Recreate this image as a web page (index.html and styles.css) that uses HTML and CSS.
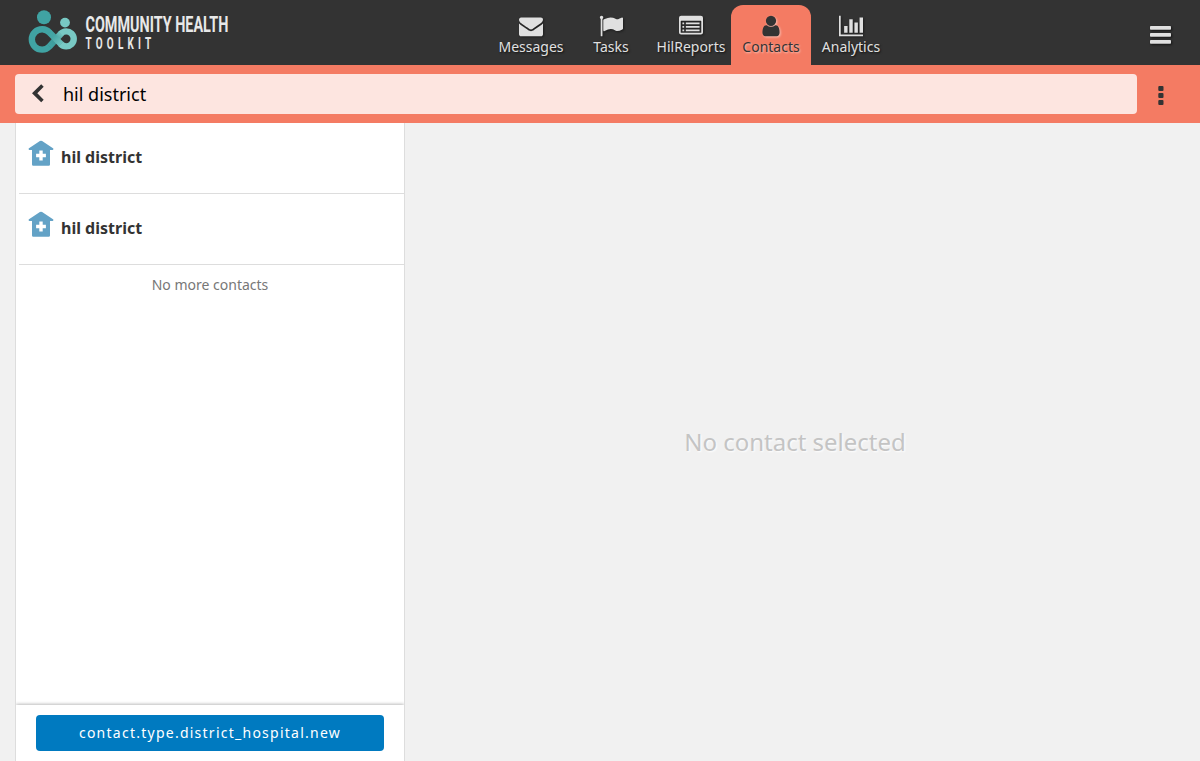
FILE: index.html
```html
<!DOCTYPE html>
<html lang="en">
<head>
<meta charset="utf-8">
<title>Contacts</title>
<link rel="stylesheet" href="styles.css">
</head>
<body>
<header class="header">
  <div class="brand">
    <svg class="logo" viewBox="0 0 240 65" role="img">
      <defs>
        <linearGradient id="band" gradientUnits="userSpaceOnUse" x1="48" y1="31" x2="63" y2="46">
          <stop offset="0" stop-color="#40a3a3"/><stop offset=".35" stop-color="#45a5a4"/><stop offset="1" stop-color="#78c9c4"/>
        </linearGradient>
        <linearGradient id="under" gradientUnits="userSpaceOnUse" x1="49" y1="46" x2="62" y2="33">
          <stop offset="0" stop-color="#40a3a3"/><stop offset=".5" stop-color="#3d9998"/><stop offset="1" stop-color="#78c9c4"/>
        </linearGradient>
      </defs>
      <circle cx="44" cy="17.2" r="7" fill="#40a3a3"/>
      <circle cx="65" cy="22.6" r="4.900" fill="#78c9c4"/>
      <g fill="none" stroke-width="6.400">
        <path d="M49.300 46.600L61.1 33.5" stroke="url(#under)"/>
        <path d="M60.800 33.700A7.500 7.500 0 1 1 60.800 44" stroke="#78c9c4"/>
        <path d="M49.600 32.600A10.2 10.2 0 1 0 49.500 46.400" stroke="#40a3a3"/>
        <path d="M49.2 32.200L61.200 44.300" stroke="url(#band)"/>
      </g>
      <g class="logo-text">
        <text transform="translate(85.500 32.400) scale(.7 1)" font-size="22" textLength="204" lengthAdjust="spacingAndGlyphs">COMMUNITY HEALTH</text>
        <text transform="translate(85.500 49.300) scale(.62 1)" font-size="16" textLength="106" lengthAdjust="spacing">TOOLKIT</text>
      </g>
    </svg>
  </div>
  <nav class="tabs">
    <a class="tab"><svg viewBox="0 0 1792 1792"><path d="M1792 710v794q0 66-47 113t-113 47h-1472q-66 0-113-47t-47-113v-794q44 49 101 87 362 246 497 345 57 42 92.5 65.5t94.5 48 110 24.5h2q51 0 110-24.5t94.5-48 92.5-65.5q170-123 498-345 57-39 100-87zm0-294q0 79-49 151t-122 123q-376 261-468 325-10 7-42.5 31t-54 38.5-52 32.5-57.5 27-50 9h-2q-23 0-50-9t-57.5-27-52-32.5-54-38.5-42.5-31q-91-64-262-182.5t-205-142.5q-62-42-117-115.5t-55-136.5q0-78 41.5-130t118.5-52h1472q65 0 112.5 47t47.5 113z"/></svg><span>Messages</span></a>
    <a class="tab"><svg viewBox="0 0 1792 1792"><path d="M320 256q0 72-64 110v1266q0 13-9.5 22.5t-22.5 9.5h-64q-13 0-22.5-9.5t-9.5-22.5v-1266q-64-38-64-110 0-53 37.5-90.5t90.5-37.5 90.5 37.5 37.5 90.5zm1472 64v763q0 25-12.5 38.5t-39.5 27.5q-215 116-369 116-61 0-123.5-22t-108.5-48-115.5-48-142.5-22q-192 0-464 146-17 9-33 9-26 0-45-19t-19-45v-742q0-32 31-55 21-14 79-43 236-120 421-120 107 0 200 29t219 88q38 19 88 19 54 0 117.5-21t110-47 88-47 54.5-21q26 0 45 19t19 45z"/></svg><span>Tasks</span></a>
    <a class="tab"><svg viewBox="0 0 1792 1792"><path fill-rule="evenodd" d="M160 128h1472a160 160 0 0 1 160 160v1088a160 160 0 0 1-160 160H160a160 160 0 0 1-160-160V288a160 160 0 0 1 160-160zM160 512a32 32 0 0 0-32 32v832a32 32 0 0 0 32 32h1472a32 32 0 0 0 32-32V544a32 32 0 0 0-32-32zM256 640h128v128H256zM512 640h1024v128H512zM256 896h128v128H256zM512 896h1024v128H512zM256 1152h128v128H256zM512 1152h1024v128H512z"/></svg><span>HilReports</span></a>
    <a class="tab selected"><svg viewBox="0 0 1792 1792"><path d="M1536 1399q0 109-62.5 187t-150.5 78h-854q-88 0-150.5-78t-62.5-187q0-85 8.5-160.5t31.5-152 58.5-131 94-89 134.5-34.5q131 128 313 128t313-128q76 0 134.5 34.5t94 89 58.5 131 31.5 152 8.5 160.5zm-256-887q0 159-112.5 271.5t-271.5 112.5-271.5-112.5-112.5-271.5 112.5-271.5 271.5-112.5 271.5 112.5 112.5 271.5z"/></svg><span>Contacts</span></a>
    <a class="tab"><svg viewBox="0 0 1792 1792"><path d="M640 896v512h-256v-512h256zm384-512v1024h-256v-1024h256zm1024 1152v128h-2048v-1536h128v1408h1920zm-640-896v768h-256v-768h256zm384-384v1152h-256v-1152h256z"/></svg><span>Analytics</span></a>
  </nav>
  <svg class="menu" viewBox="0 0 21 18"><rect width="21" height="3.7" rx=".8"/><rect y="7" width="21" height="3.7" rx=".8"/><rect y="14" width="21" height="3.7" rx=".8"/></svg>
</header>
<div class="filters">
  <div class="search">
    <svg class="back" viewBox="0 0 12 19"><path d="M9.2.2L11.7 2.700 5.300 9.2l6.400 6.500-2.5 2.5L0 9.2z"/></svg>
    <span>hil district</span>
  </div>
  <svg class="more" viewBox="0 0 6 20"><rect x=".3" y=".1" width="5.2" height="5" rx="1"/><rect x=".3" y="7.1" width="5.2" height="5" rx="1"/><rect x=".3" y="14.1" width="5.2" height="5" rx="1"/></svg>
</div>
<main class="content">
  <section class="inbox">
    <ul class="contacts">
      <li><svg viewBox="0 0 26 26"><path fill-rule="evenodd" d="M13 .7q.6 0 1.1.4L25 8.200q.7.6.3 1.300l-.6.4H22v14.6q0 1.3-1.3 1.3H5.3Q4 25.8 4 24.5V9.9H1.300L.700 9.500Q.3 8.800 1 8.200L11.9 1.1Q12.4.7 13 .7zM11.3 10.600v3.2H8.1v3.4h3.2v3.2h3.4v-3.2h3.2v-3.4h-3.2v-3.2z"/></svg><span>hil district</span></li>
      <li><svg viewBox="0 0 26 26"><path fill-rule="evenodd" d="M13 .7q.6 0 1.1.4L25 8.200q.7.6.3 1.300l-.6.4H22v14.6q0 1.3-1.3 1.3H5.3Q4 25.8 4 24.5V9.9H1.300L.700 9.500Q.3 8.800 1 8.200L11.9 1.1Q12.4.7 13 .7zM11.3 10.600v3.2H8.1v3.4h3.2v3.2h3.4v-3.2h3.2v-3.4h-3.2v-3.2z"/></svg><span>hil district</span></li>
    </ul>
    <p class="end">No more contacts</p>
    <div class="actions"><button class="new">contact.type.district_hospital.new</button></div>
  </section>
  <section class="detail">No contact selected</section>
</main>
</body>
</html>
```
FILE: styles.css
```css
* { box-sizing: border-box; }
body {
  margin: 0;
  height: 761px;
  display: flex;
  flex-direction: column;
  overflow: hidden;
  background: #f1f1f1;
  color: #333;
  font: 14px/20px "Noto Sans", sans-serif;
}
.header {
  height: 65px;
  display: grid;
  grid-template-columns: 491px 400px 1fr;
  background: #333;
}
.logo { display: block; width: 240px; height: 65px; overflow: visible; }
.logo-text { fill: #e8e8e8; font-family: Roboto, sans-serif; font-weight: 700; }
.tabs { display: flex; padding-top: 5px; }
.tab {
  width: 80px;
  height: 60px;
  padding-top: 8.5px;
  display: flex;
  flex-direction: column;
  align-items: center;
  color: #e0e0e0;
  text-shadow: 1px 1px 2px #111;
}
.tab svg { width: 24px; height: 24px; fill: currentColor; filter: drop-shadow(1px 1px 1px #111a); }
.tab span { margin-top: -.5px; }
.tab.selected {
  background: #f47b63;
  border-radius: 12px 12px 0 0;
  color: #333;
  text-shadow: 1px 1px 2px #fff8;
}
.tab.selected svg { filter: drop-shadow(1px 1px 1px #fff8); }
.menu {
  width: 21px;
  height: 18px;
  margin: 26px 29.5px 0 0;
  justify-self: end;
  fill: #e0e0e0;
  overflow: visible;
  filter: drop-shadow(1px 1px 1px #111);
}
.filters {
  height: 58px;
  padding: 9px 36px 0 15px;
  display: flex;
  justify-content: space-between;
  background: #f47b63;
}
.search {
  width: 1122px;
  height: 40px;
  padding-left: 16.5px;
  display: flex;
  align-items: center;
  gap: 19.5px;
  border-radius: 4px;
  background: #fde5e0;
  color: #000;
  font-size: 18px;
}
.back { width: 12px; height: 19px; margin-bottom: 2px; fill: #333; }
.more { width: 6px; height: 20px; margin-top: 12px; fill: #333; }
.content { flex: 1; display: flex; padding-left: 15px; }
.inbox {
  width: 390px;
  display: flex;
  flex-direction: column;
  border: solid #ddd;
  border-width: 0 1px;
  background: #fff;
}
.contacts { margin: 0; padding: 0 0 0 3px; list-style: none; }
.contacts li {
  height: 71px;
  padding: 17px 0 0 9px;
  display: flex;
  gap: 7px;
  border-bottom: 1px solid #ddd;
  font-size: 16px;
  font-weight: 700;
}
.contacts svg { width: 26px; height: 26px; fill: #63a2c6; }
.contacts span { padding-top: 7px; }
.end { margin: 10px 0 0; text-align: center; color: #777; }
.actions {
  height: 56px;
  margin-top: auto;
  padding: 10px 20px;
  box-shadow: 0 -1px 3px #0004;
  clip-path: inset(-5px 0 0);
}
.new {
  display: block;
  width: 100%;
  height: 36px;
  padding: 0;
  border: 0;
  border-radius: 4px;
  background: #007ac0;
  color: #fff;
  font: 14px/20px "Noto Sans", sans-serif;
  letter-spacing: 1.25px;
}
.detail {
  flex: 1;
  display: flex;
  align-items: center;
  justify-content: center;
  padding-right: 15px;
  color: #c4c4c4;
  font-size: 24px;
  text-shadow: 1px 1px 2px #fff;
}
```
